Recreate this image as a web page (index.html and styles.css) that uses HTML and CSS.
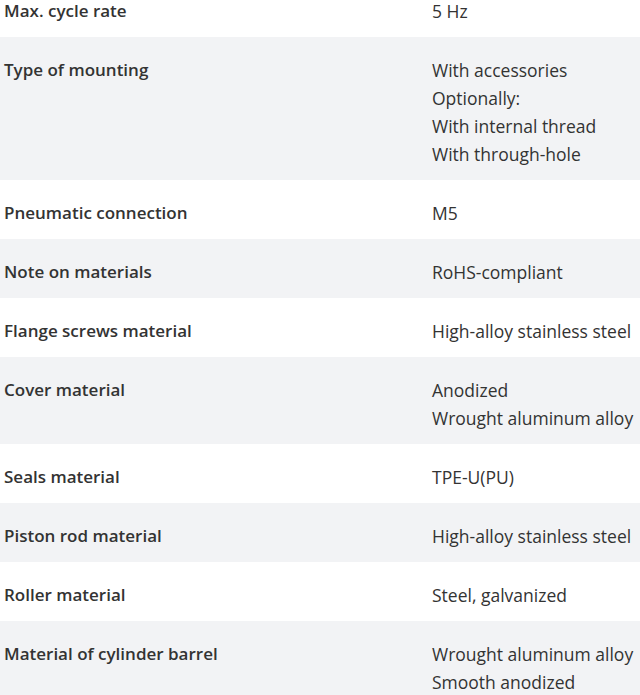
FILE: index.html
```html
<!DOCTYPE html>
<html lang="en">
<head>
<meta charset="utf-8">
<title>Technical data</title>
<link rel="stylesheet" href="styles.css">
</head>
<body>
<div class="specs">
  <div class="row first"><div class="label">Max. cycle rate</div><div class="value">5 Hz</div></div>
  <div class="row alt"><div class="label">Type of mounting</div><div class="value">With accessories<br>Optionally:<br>With internal thread<br>With through-hole</div></div>
  <div class="row"><div class="label">Pneumatic connection</div><div class="value">M5</div></div>
  <div class="row alt"><div class="label">Note on materials</div><div class="value">RoHS-compliant</div></div>
  <div class="row"><div class="label">Flange screws material</div><div class="value">High-alloy stainless steel</div></div>
  <div class="row alt"><div class="label">Cover material</div><div class="value">Anodized<br>Wrought aluminum alloy</div></div>
  <div class="row"><div class="label">Seals material</div><div class="value">TPE-U(PU)</div></div>
  <div class="row alt"><div class="label">Piston rod material</div><div class="value">High-alloy stainless steel</div></div>
  <div class="row"><div class="label">Roller material</div><div class="value">Steel, galvanized</div></div>
  <div class="row alt"><div class="label">Material of cylinder barrel</div><div class="value">Wrought aluminum alloy<br>Smooth anodized</div></div>
</div>
</body>
</html>
```
FILE: styles.css
```css
html, body {
  margin: 0;
  padding: 0;
  background: #ffffff;
  overflow: hidden;
}
.specs {
  font-family: "Open Sans", "Noto Sans", sans-serif;
  font-size: 17px;
  line-height: 28px;
  color: #333333;
}
.row {
  display: grid;
  grid-template-columns: 428px 1fr;
  padding: 19px 0 12px 4px;
  background: #ffffff;
}
.row.first {
  padding-top: 0;
  padding-bottom: 15px;
  line-height: 22px;
}
.row.alt {
  background: #f2f3f5;
}
.label {
  font-weight: 600;
  white-space: nowrap;
}
.value {
  font-size: 17.5px;
  white-space: nowrap;
}
```
